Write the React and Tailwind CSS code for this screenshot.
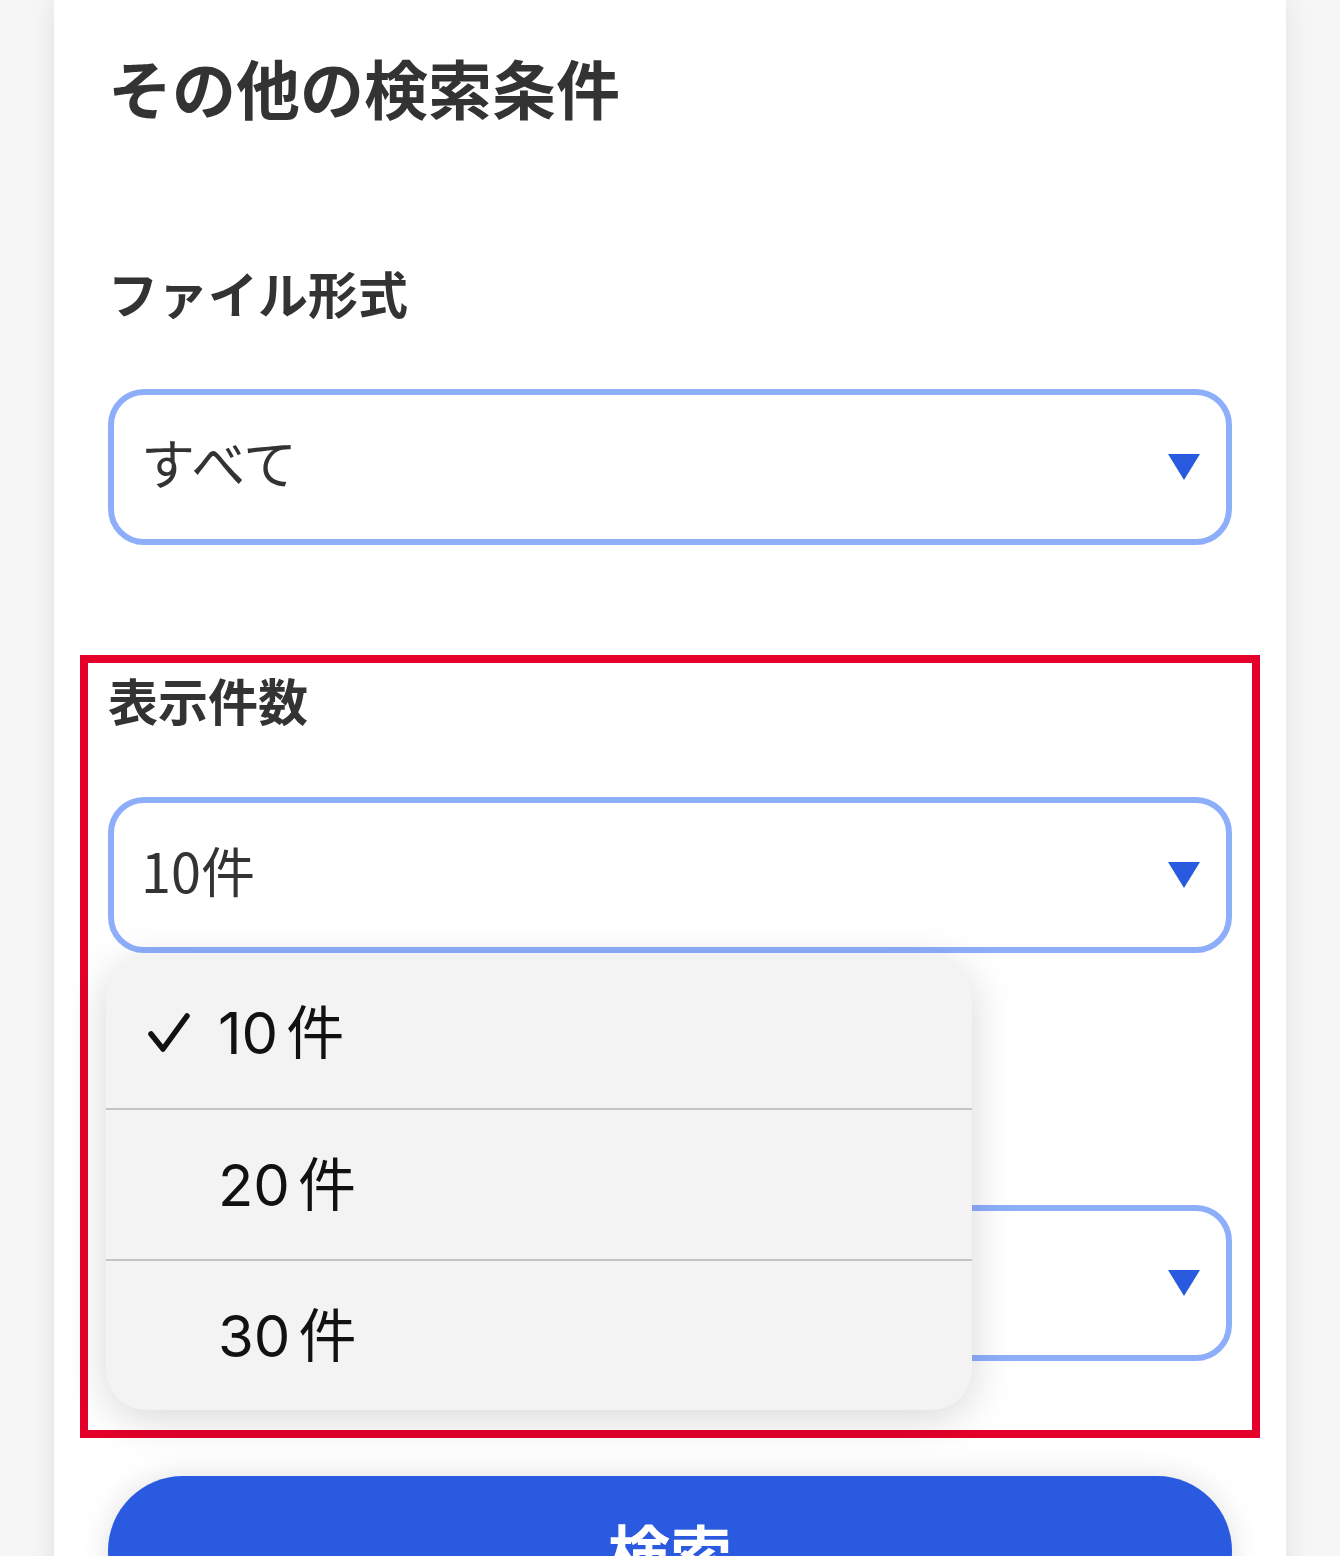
import React from "react";

const Caret = () => (
  <svg width="32" height="26" viewBox="0 0 32 26" className="shrink-0">
    <polygon points="0,0 32,0 16,26" fill="#2a5ae0" />
  </svg>
);

const Select = ({ value, className = "" }) => {
  return (
    <div
      className={`h-[156px] rounded-[36px] border-[6px] border-[#8eaefc] bg-white flex items-center justify-between pl-[27px] pr-[26px] ${className}`}>
      <span className="text-[54px] leading-none text-[#333] -mt-[10px]">{value}</span>
      <Caret />
    </div>
  );
};

const Label = ({ children, className = "" }) => (
  <p className={`text-[50px] leading-[58px] font-bold text-[#333] ${className}`}>{children}</p>
);

export default function App() {
  const options = ["10", "20", "30"];
  return (
    <div className="h-[1556px] overflow-hidden bg-[#f6f6f6] font-['Noto_Sans_CJK_JP',sans-serif]">
      <div className="ml-[54px] w-[1232px] min-h-full bg-white shadow-[0_0_26px_rgba(0,0,0,0.09)] px-[54px] pt-[48px] pb-[80px]">
        <h2 className="text-[64px] leading-[76px] font-bold text-[#333]">その他の検索条件</h2>

        <Label className="mt-[139px]">ファイル形式</Label>
        <Select value="すべて" className="mt-[68px]" />

        {/* highlighted section */}
        <div className="mt-[110px] -mx-[28px] border-8 border-[#e4002b] px-[20px] pt-[7px] pb-[69px]">
          <Label>表示件数</Label>
          <div className="relative mt-[69px]">
            <Select value="10件" />
            <div className="absolute z-10 top-full mt-[4px] -left-[2px] w-[866px] rounded-[40px] bg-[#f3f3f4] shadow-[0_8px_44px_rgba(0,0,0,0.16)] overflow-hidden font-['Inter','Noto_Sans_CJK_JP',sans-serif]">
              {options.map((opt, idx) => (
                <div
                  key={opt}
                  className={`h-[151px] flex items-center pl-[42px] ${idx > 0 ? "border-t-2 border-[#c3c3c6]" : ""}`}>
                  <div className="w-[42px] flex items-center">
                    {idx === 0 && (
                      <svg width="42" height="40" viewBox="0 0 42 40">
                        <polyline
                          points="3,21 15,36 39,3"
                          fill="none"
                          stroke="#111"
                          strokeWidth="5.5"
                          strokeLinecap="round"
                          strokeLinejoin="round" />
                      </svg>
                    )}
                  </div>
                  <span className="ml-[28px] text-[58px] leading-none text-[#111]">
                    {opt}
                    <span className="ml-[8px]">件</span>
                  </span>
                </div>
              ))}
            </div>
          </div>

          {/* the next field's label sits under the open menu */}
          <div className="mt-[125px] h-[58px]" />
          <Select value="" className="mt-[69px]" />
        </div>

        <button className="mt-[38px] w-full h-[150px] rounded-full bg-[#2a5ae0] shadow-[0_0_30px_rgba(0,0,0,0.12)] text-white text-[62px] font-bold">
          検索
        </button>
      </div>
    </div>
  );
}
